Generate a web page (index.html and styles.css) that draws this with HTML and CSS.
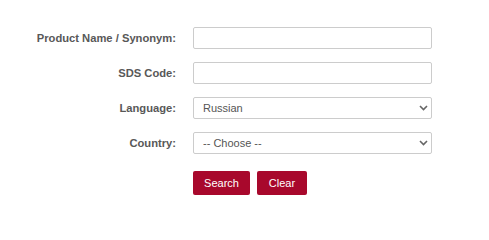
FILE: index.html
```html
<!DOCTYPE html>
<html lang="en">
<head>
<meta charset="utf-8">
<title>SDS Search</title>
<link rel="stylesheet" href="styles.css">
</head>
<body>
<form class="search-form">
  <div class="form-grid">
    <label class="field-label" for="product">Product Name / Synonym:</label>
    <input class="field-control" id="product" type="text">

    <label class="field-label" for="sds">SDS Code:</label>
    <input class="field-control" id="sds" type="text">

    <label class="field-label" for="language">Language:</label>
    <div class="select-wrap">
      <select class="field-control field-select" id="language">
        <option>Russian</option>
      </select>
      <svg class="chevron" width="9" height="6" viewBox="0 0 9 6" aria-hidden="true"><path d="M1 1 L4.5 4.5 L8 1" fill="none" stroke="#666" stroke-width="1.6"/></svg>
    </div>

    <label class="field-label" for="country">Country:</label>
    <div class="select-wrap">
      <select class="field-control field-select" id="country">
        <option>-- Choose --</option>
      </select>
      <svg class="chevron" width="9" height="6" viewBox="0 0 9 6" aria-hidden="true"><path d="M1 1 L4.5 4.5 L8 1" fill="none" stroke="#666" stroke-width="1.6"/></svg>
    </div>

    <span></span>
    <div class="actions">
      <button type="button" class="btn btn-search">Search</button>
      <button type="button" class="btn btn-clear">Clear</button>
    </div>
  </div>
</form>
</body>
</html>
```
FILE: styles.css
```css
html, body {
  margin: 0;
  padding: 0;
  background: #ffffff;
}

body {
  font-family: "Liberation Sans", Arial, sans-serif;
}

.search-form {
  padding-top: 27px;
}

.form-grid {
  display: grid;
  grid-template-columns: 176px 239px;
  column-gap: 17px;
  row-gap: 13px;
  align-items: center;
}

.field-label {
  justify-self: end;
  font-size: 11.2px;
  font-weight: bold;
  color: #585858;
}

.field-control {
  box-sizing: border-box;
  width: 239px;
  height: 22px;
  margin: 0;
  border: 1px solid #cccccc;
  border-radius: 2px;
  background: #ffffff;
  font-family: "Liberation Sans", Arial, sans-serif;
  font-size: 11px;
  color: #555555;
  padding: 0 6px;
  display: block;
}

.select-wrap {
  position: relative;
  width: 239px;
  height: 22px;
}

.field-select {
  -webkit-appearance: none;
  appearance: none;
  padding: 0 20px 0 9px;
}

.chevron {
  position: absolute;
  right: 4px;
  top: 8px;
  pointer-events: none;
}

.actions {
  display: flex;
  gap: 7px;
  margin-top: 4px;
}

.btn {
  height: 24px;
  border: none;
  border-radius: 2px;
  background: #a8082c;
  color: #ffffff;
  font-family: "Liberation Sans", Arial, sans-serif;
  font-size: 11px;
  cursor: pointer;
}

.btn-search {
  width: 57px;
  padding: 0;
}

.btn-clear {
  width: 50px;
  padding: 0;
}
```
